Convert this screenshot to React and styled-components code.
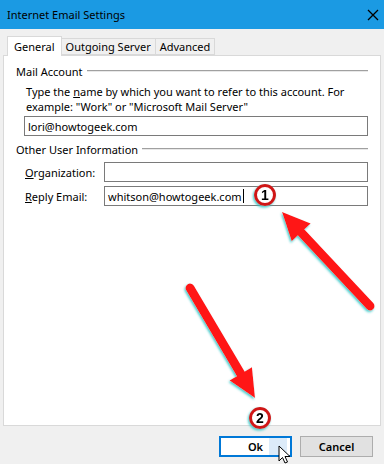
import React from 'react';
import styled, { createGlobalStyle } from 'styled-components';

const GlobalStyle = createGlobalStyle`
  html, body {
    margin: 0;
    padding: 0;
    background: #f0f0f0;
  }
  body {
    font-family: 'Noto Sans', 'Open Sans', sans-serif;
    font-size: 11px;
    color: #000;
  }
`;

const Window = styled.div`
  position: relative;
  width: 384px;
  height: 464px;
  overflow: hidden;
  background: #f0f0f0;
  display: flex;
  flex-direction: column;
`;

const TitleBar = styled.div`
  height: 29px;
  flex-shrink: 0;
  background: #1b9ae3;
  display: flex;
  align-items: center;
  justify-content: space-between;
  padding: 0 5px 0 7px;
`;

const Title = styled.span`
  font-size: 11px;
  color: #000;
`;

const Body = styled.div`
  padding: 7px 3px 0 3px;
  display: flex;
  flex-direction: column;
`;

const TabRow = styled.div`
  display: flex;
  align-items: flex-end;
  padding-left: 4px;
  height: 19px;
  position: relative;
  z-index: 1;
`;

const Tab = styled.div`
  height: ${p => (p.$active ? '20px' : '17px')};
  margin-bottom: ${p => (p.$active ? '-1px' : '0')};
  box-sizing: border-box;
  padding: 0 ${p => (p.$active ? '6px' : '4px')};
  border: 1px solid #d9d9d9;
  border-bottom: ${p => (p.$active ? 'none' : '1px solid #d9d9d9')};
  border-left: ${p => (p.$first ? '1px solid #d9d9d9' : 'none')};
  background: ${p => (p.$active ? '#fff' : '#f0f0f0')};
  display: flex;
  align-items: center;
  line-height: 1;
`;

const Panel = styled.div`
  height: 371px;
  box-sizing: border-box;
  border: 1px solid #d9d9d9;
  background: #fff;
  padding-top: 8px;
`;

const GroupHeader = styled.div`
  display: flex;
  align-items: center;
  padding: 0 12px 0 12px;
  height: 14px;
  margin-top: ${p => p.$gap || 0}px;
`;

const GroupLine = styled.div`
  flex: 1;
  margin-left: 4px;
  height: 0;
  border-top: 1px solid #a0a0a0;
  border-bottom: 1px solid #e8e8e8;
`;

const Group = styled.div`
  padding: ${p => p.$top || 0}px 12px 0 20px;
`;

const Hint = styled.p`
  margin: 0 0 0 2px;
  line-height: 15px;
  white-space: nowrap;
`;

const Field = styled.div`
  height: 20px;
  box-sizing: border-box;
  border: 1px solid #7a7a7a;
  background: #fff;
  display: flex;
  align-items: center;
  padding-left: 3px;
  flex: 1;
`;

const FormRow = styled.div`
  display: flex;
  align-items: center;
  margin-top: ${p => p.$gap || 0}px;
`;

const RowLabel = styled.span`
  width: 79px;
  margin-left: 1px;
  flex-shrink: 0;
`;

const Caret = styled.span`
  display: inline-block;
  width: 1px;
  height: 14px;
  background: #000;
  margin-left: 1px;
`;

const Footer = styled.div`
  display: flex;
  justify-content: flex-end;
  gap: 8px;
  padding: 10px 8px 0 0;
`;

const Button = styled.div`
  width: 73px;
  height: 21px;
  box-sizing: border-box;
  display: flex;
  align-items: center;
  justify-content: center;
  font-weight: 600;
  border: ${p => (p.$primary ? '2px solid #0078d7' : '1px solid #adadad')};
  background: ${p =>
    p.$primary ? 'linear-gradient(to right, #fff 70%, #dcebf9 70%, #dcebf9 95%, #fff 95%)' : '#e1e1e1'};
`;

const Overlay = styled.svg`
  position: absolute;
  left: 0;
  top: 0;
  pointer-events: none;
`;

const Arrow = ({ tail, tip }) => {
  const dx = tip[0] - tail[0];
  const dy = tip[1] - tail[1];
  const len = Math.hypot(dx, dy);
  const ux = dx / len;
  const uy = dy / len;
  const L = 28;
  const W = 13;
  const bx = tip[0] - L * ux;
  const by = tip[1] - L * uy;
  const nx = -uy * W;
  const ny = ux * W;
  return (
    <g>
      <line x1={tail[0]} y1={tail[1]} x2={bx + ux * 2} y2={by + uy * 2} stroke="#ff1414" strokeWidth="9" strokeLinecap="round" />
      <polygon points={`${tip[0]},${tip[1]} ${bx + nx},${by + ny} ${bx - nx},${by - ny}`} fill="#ff1414" />
    </g>
  );
};

const Badge = ({ cx, cy, n }) => (
  <g>
    <circle cx={cx} cy={cy} r="9.5" fill="#fff" stroke="#d01818" strokeWidth="3" />
    <text x={cx} y={cy + 5} textAnchor="middle" fontFamily="'Liberation Sans', sans-serif" fontWeight="bold" fontSize="14" fill="#000">
      {n}
    </text>
  </g>
);

const U = styled.span`
  text-decoration: underline;
`;

export default function App() {
  return (
    <>
      <GlobalStyle />
      <Window>
        <TitleBar>
          <Title>Internet Email Settings</Title>
          <svg width="12" height="12" viewBox="0 0 12 12">
            <path d="M1 1 L11 11 M11 1 L1 11" stroke="#000" strokeWidth="1.3" />
          </svg>
        </TitleBar>
        <Body>
          <TabRow>
            <Tab $active $first>General</Tab>
            <Tab>Outgoing Server</Tab>
            <Tab>Advanced</Tab>
          </TabRow>
          <Panel>
            <GroupHeader>
              <span>Mail Account</span>
              <GroupLine />
            </GroupHeader>
            <Group $top={6}>
              <Hint>
                Type the <U>n</U>ame by which you want to refer to this account. For
                <br />
                example: "Work" or "Microsoft Mail Server"
              </Hint>
              <FormRow $gap={2}>
                <Field>lori@howtogeek.com</Field>
              </FormRow>
            </Group>
            <GroupHeader $gap={6}>
              <span>Other User Information</span>
              <GroupLine />
            </GroupHeader>
            <Group $top={0}>
              <FormRow $gap={6}>
                <RowLabel>
                  <U>O</U>rganization:
                </RowLabel>
                <Field />
              </FormRow>
              <FormRow $gap={4}>
                <RowLabel>
                  <U>R</U>eply Email:
                </RowLabel>
                <Field>
                  whitson@howtogeek.com
                  <Caret />
                </Field>
              </FormRow>
            </Group>
          </Panel>
          <Footer>
            <Button $primary>Ok</Button>
            <Button>Cancel</Button>
          </Footer>
        </Body>
        <Overlay width="384" height="464" viewBox="0 0 384 464">
          <defs>
            <filter id="teal" x="-20%" y="-20%" width="140%" height="140%">
              <feDropShadow dx="-1" dy="1.5" stdDeviation="0.8" floodColor="#2fc6c6" floodOpacity="0.9" />
            </filter>
          </defs>
          <g filter="url(#teal)">
            <Arrow tail={[370, 306]} tip={[282, 212]} />
            <Arrow tail={[190, 288]} tip={[255, 398]} />
            <Badge cx={265} cy={195} n="1" />
            <Badge cx={260} cy={418} n="2" />
          </g>
          <path
            d="M279 446 L279 461 L282.5 457.5 L285 463 L287.5 462 L285 456.5 L290 456.5 Z"
            fill="#fff"
            stroke="#000"
            strokeWidth="1"
            strokeLinejoin="round"
          />
        </Overlay>
      </Window>
    </>
  );
}
